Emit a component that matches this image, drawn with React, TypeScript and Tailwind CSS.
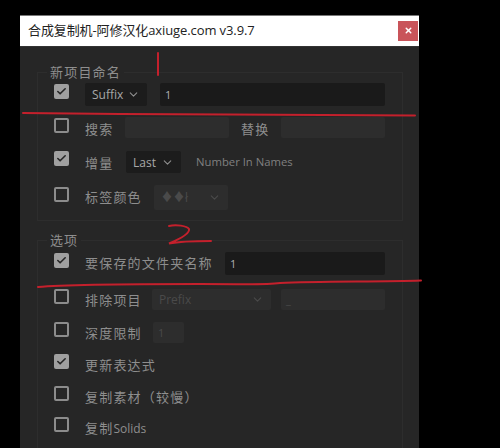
import { Check, ChevronDown, X } from "lucide-react";

const cjk = "font-['Open_Sans','Noto_Sans_CJK_SC',sans-serif]";

function Box({ on, className = "" }: { on?: boolean; className?: string }) {
  return on ? (
    <span className={`flex h-[15px] w-[15px] shrink-0 items-center justify-center rounded-[2px] bg-[#a0a0a0] ${className}`}>
      <Check size={11} strokeWidth={3.5} className="text-[#262626]" />
    </span>
  ) : (
    <span className={`h-[15px] w-[15px] shrink-0 rounded-[2px] border-2 border-[#8c8c8c] ${className}`} />
  );
}

function Label({ children, className = "" }: { children: React.ReactNode; className?: string }) {
  return <span className={`text-[13px] leading-[18px] tracking-[1.2px] text-[#8e8e8e] ${className}`}>{children}</span>;
}

function Select({ text, className = "", disabled }: { text: string; className?: string; disabled?: boolean }) {
  return (
    <div
      className={`flex items-center justify-between rounded-[2px] pl-[7px] pr-[7px] text-[12px] ${
        disabled ? "bg-[#2d2d2d] text-[#4a4a4a]" : "bg-[#1c1c1c] text-[#a8a8a8]"
      } ${className}`}
    >
      <span className="pt-[1px]">{text}</span>
      <ChevronDown size={13} className={disabled ? "text-[#4a4a4a]" : "text-[#8e8e8e]"} />
    </div>
  );
}

function Input({ value, className = "", disabled }: { value?: string; className?: string; disabled?: boolean }) {
  return (
    <div
      className={`flex items-center rounded-[2px] pl-[5px] pt-[1px] text-[11px] ${
        disabled ? "bg-[#2d2d2d] text-[#4a4a4a]" : "bg-[#1a1a1a] text-[#b0b0b0]"
      } ${className}`}
    >
      {value}
    </div>
  );
}

export default function App() {
  return (
    <div className={`relative h-[448px] w-[500px] overflow-hidden bg-black ${cjk}`}>
      <div className="ml-5 mt-[15px] h-[433px] w-[399px] bg-[#262626]">
        <div className="flex h-[32px] items-center justify-between border-y border-[#777] border-b-[#333] bg-white pl-2 pr-[1px]">
          <span className="text-[13px] tracking-[-0.1px] text-[#222]">合成复制机-阿修汉化axiuge.com v3.9.7</span>
          <button className="mt-[-1px] flex h-[20px] w-[20px] items-center justify-center bg-[#c9545a] text-white">
            <X size={9} strokeWidth={4} />
          </button>
        </div>

        <fieldset className="ml-[17px] mt-[15px] h-[159px] w-[366px] border border-[#2d2d2d] pl-[16px] pt-[1px]">
          <legend className="ml-[-7px] px-[3px] text-[13px] leading-[20px] tracking-[1.2px] text-[#8e8e8e]">新项目命名</legend>
          <div className="flex h-[34px] items-start">
            <Box on className="mt-[1px]" />
            <Select text="Suffix" className="ml-4 h-[23px] w-[62px]" />
            <Input value="1" className="ml-[13px] h-[23px] w-[225px]" />
          </div>
          <div className="flex h-[34px] items-start">
            <Box className="mt-[1px]" />
            <Label className="ml-4 mt-[3px] w-[40px]">搜索</Label>
            <Input disabled className="h-[21px] w-[104px]" />
            <Label className="ml-3 mt-[3px] w-[40px]">替换</Label>
            <Input disabled className="h-[21px] w-[104px]" />
          </div>
          <div className="flex h-[34px] items-start">
            <Box on />
            <Label className="ml-4 mt-[3px] w-[41px]">增量</Label>
            <Select text="Last" className="h-[22px] w-[55px]" />
            <span className="ml-[15px] mt-[2px] text-[11.3px] leading-[18px] text-[#808080]">Number In Names</span>
          </div>
          <div className="flex h-[34px] items-start">
            <Box className="mt-[2px]" />
            <Label className="ml-4 mt-[3px] w-[69px]">标签颜色</Label>
            <Select disabled text="♦♦ł" className="h-[25px] w-[74px]" />
          </div>
        </fieldset>

        <fieldset className="ml-[17px] mt-[9px] h-[230px] w-[366px] border border-[#2d2d2d] pl-[16px] pt-[2px]">
          <legend className="ml-[-7px] px-[3px] text-[13px] leading-[20px] tracking-[1px] text-[#8e8e8e]">选项</legend>
          <div className="flex h-[37px] items-start">
            <Box on className="mt-[1px]" />
            <Label className="ml-4 mt-[2px] w-[140px]">要保存的文件夹名称</Label>
            <Input value="1" className="h-[23px] w-[160px]" />
          </div>
          <div className="flex h-[33px] items-start">
            <Box />
            <Label className="ml-4 mt-[2px] w-[67px]">排除项目</Label>
            <Select disabled text="Prefix" className="h-[21px] w-[119px]" />
            <Input disabled value="_" className="ml-[10px] h-[21px] w-[104px]" />
          </div>
          <div className="flex h-[32px] items-start">
            <Box />
            <Label className="ml-4 mt-[2px] w-[68px]">深度限制</Label>
            <Input disabled value="1" className="h-[21px] w-[31px]" />
          </div>
          <div className="flex h-[32px] items-start">
            <Box on />
            <Label className="ml-4 mt-[2px]">更新表达式</Label>
          </div>
          <div className="flex h-[31px] items-start">
            <Box />
            <Label className="ml-4 mt-[2px]">复制素材（较慢）</Label>
          </div>
          <div className="flex h-[31px] items-start">
            <Box />
            <Label className="ml-4 mt-[2px]">
              复制<span className="text-[12px] tracking-normal">Solids</span>
            </Label>
          </div>
        </fieldset>
      </div>

      {/* pen marks drawn over the screenshot */}
      <svg className="absolute left-0 top-0" width="500" height="448" fill="none" stroke="#c4202c" strokeLinecap="round">
        <path d="M158 53V75" strokeWidth="2" />
        <path d="M23 113L120 114L230 114.5L415 115.5" strokeWidth="2" />
        <path d="M169 226C176 224 187 226 189 229C190 233 182 238 169 243.5C182 241 198 241 211 241" strokeWidth="2" />
        <path d="M38 287C70 284 130 284 200 284C250 284 265 285 280 283C320 281 380 282 421 280.5" strokeWidth="2" />
      </svg>
    </div>
  );
}
